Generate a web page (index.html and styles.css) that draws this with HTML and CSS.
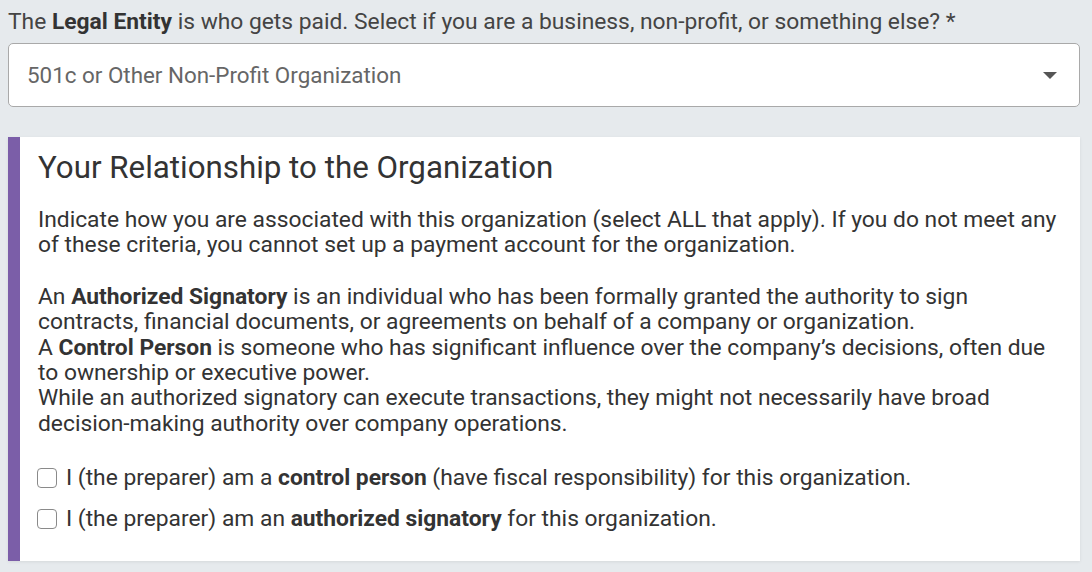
FILE: index.html
```html
<!DOCTYPE html>
<html>
<head>
<meta charset="utf-8">
<link rel="stylesheet" href="styles.css">
</head>
<body>
<div class="page">
  <div class="field">
    <div class="label">The <b>Legal Entity</b> is who gets paid. Select if you are a business, non-profit, or something else? *</div>
    <div class="select">
      <span class="select-value">501c or Other Non-Profit Organization</span>
      <svg class="caret" width="14" height="7" viewBox="0 0 14 7"><polygon points="0,0 14,0 7,7" fill="#555"/></svg>
    </div>
  </div>
  <div class="card">
    <h2 class="card-title">Your Relationship to the Organization</h2>
    <p class="para">Indicate how you are associated with this organization (select ALL that apply). If you do not meet any of these criteria, you cannot set up a payment account for the organization.</p>
    <div class="para">
      <div>An <b>Authorized Signatory</b> is an individual who has been formally granted the authority to sign contracts, financial documents, or agreements on behalf of a company or organization.</div>
      <div>A <b>Control Person</b> is someone who has significant influence over the company’s decisions, often due to ownership or executive power.</div>
      <div>While an authorized signatory can execute transactions, they might not necessarily have broad decision-making authority over company operations.</div>
    </div>
    <div class="checks">
      <label class="check"><span class="box"></span><span>I (the preparer) am a <b>control person</b> (have fiscal responsibility) for this organization.</span></label>
      <label class="check"><span class="box"></span><span>I (the preparer) am an <b>authorized signatory</b> for this organization.</span></label>
    </div>
  </div>
</div>
</body>
</html>
```
FILE: styles.css
```css
html, body {
  margin: 0;
  padding: 0;
  background: #e6eaed;
}
body {
  font-family: Roboto, "Noto Sans", sans-serif;
  color: #333;
}
.page {
  padding: 9px 12px 10px 8px;
  width: 1072px;
}
.field {
  margin-bottom: 30px;
}
.label {
  font-size: 22.8px;
  color: #444;
  line-height: 26px;
  margin-bottom: 8px;
  white-space: nowrap;
}
.label b {
  font-weight: 700;
  color: #333;
}
.select {
  box-sizing: border-box;
  height: 64px;
  background: #fff;
  border: 1px solid #a9a9a9;
  border-radius: 5px;
  display: flex;
  align-items: center;
  justify-content: space-between;
  padding: 0 22px 0 18px;
}
.select-value {
  font-size: 22.4px;
  color: #666;
}
.caret {
  display: block;
}
.card {
  background: #fff;
  border-left: 12px solid #7b5ea8;
  padding: 13px 14px 28px 18px;
  box-shadow: 0 1px 3px rgba(0,0,0,0.08);
}
.card-title {
  margin: 0 0 21px 0;
  font-size: 31.3px;
  font-weight: 400;
  color: #333;
  line-height: 36px;
}
.para {
  margin: 0 0 26px 0;
  font-size: 22.8px;
  line-height: 25.4px;
  color: #333;
}
.para + .para {
  margin-bottom: 28px;
}
.checks {
  display: flex;
  flex-direction: column;
  gap: 13px;
}
.check {
  display: flex;
  align-items: center;
  gap: 9px;
  font-size: 22.8px;
  line-height: 28px;
  color: #333;
}
.box {
  box-sizing: border-box;
  width: 20px;
  height: 20px;
  margin-left: -1px;
  border: 1.5px solid #8a8a8a;
  border-radius: 4px;
  background: #fff;
  flex: none;
}
```
